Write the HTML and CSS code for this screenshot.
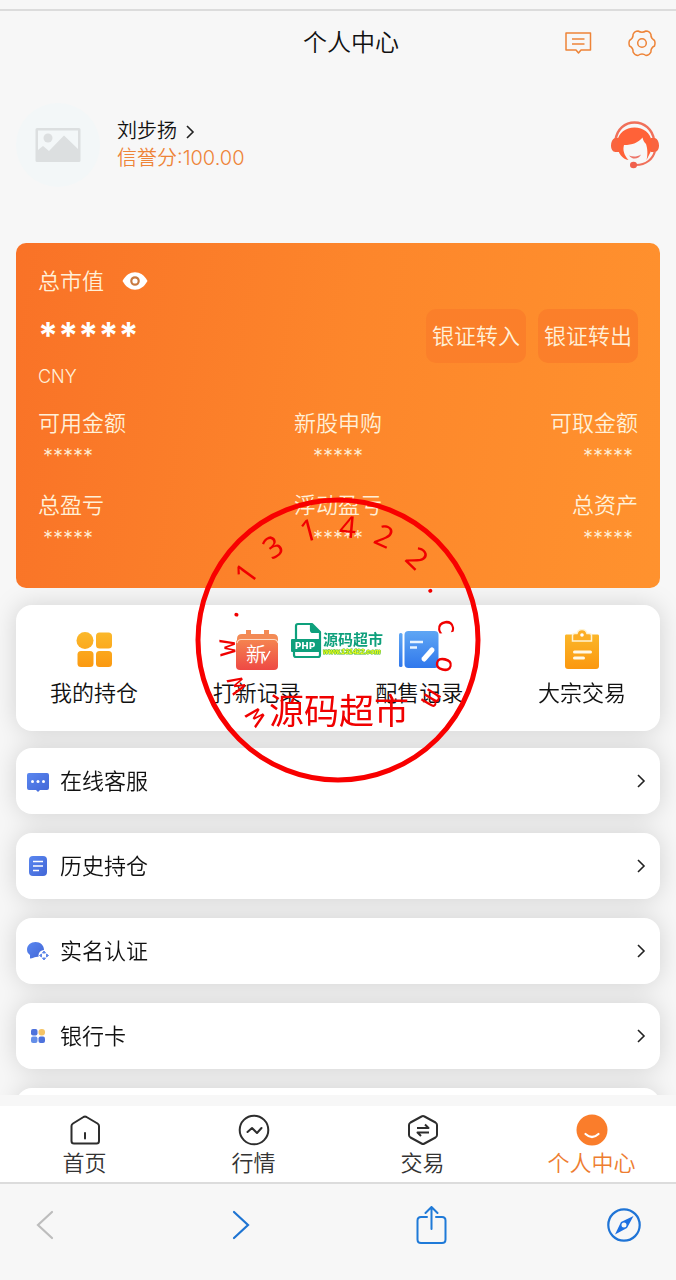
FILE: index.html
```html
<!DOCTYPE html>
<html lang="zh-CN">
<head>
    <meta charset="UTF-8">
    <meta name="viewport" content="width=device-width, initial-scale=1.0">
    <title>个人中心</title>
    <link rel="stylesheet" href="styles.css">
</head>
<body>
    <div class="app">
        <header class="top-bar">
            <h1 class="top-title">个人中心</h1>
            <div class="top-actions">
                <button class="icon-btn" type="button" aria-label="消息">
                    <svg width="28" height="28" viewBox="0 0 28 28" fill="none" stroke="#ee8438" stroke-width="1.500" stroke-linejoin="round">
                        <path d="M2 4h24.500v17H17l-2.500 3-2.500-3H2z"/>
                        <path d="M8 10h12.500M8 15h12.500"/>
                    </svg>
                </button>
                <button class="icon-btn" type="button" aria-label="设置">
                    <svg width="28" height="28" viewBox="0 0 28 28" fill="none" stroke="#ee8438" stroke-width="1.500" stroke-linejoin="round">
                        <path d="M10 2Q14 4.500 18 2Q21.500 2 23 5.500Q22.500 9 26.500 11.500Q27.500 14 26.500 17Q22.500 19 23 23Q21 26.500 18 26.500Q14 23.500 10 26.500Q7 26.500 5 23Q5.500 19 1.500 17Q.5 14 1.500 11.500Q5.500 9 5 5.500Q6.500 2 10 2Z"/>
                        <circle cx="14" cy="14" r="4.300"/>
                    </svg>
                </button>
            </div>
        </header>

        <main class="page">
            <!-- User -->
            <section class="profile">
                <div class="avatar">
                    <svg width="46" height="36" viewBox="0 0 46 36">
                        <path fill="#dcdfe0" fill-rule="evenodd" d="M2 1h42a1.500 1.500 0 0 1 1.500 1.500v31A1.500 1.500 0 0 1 44 35H2a1.500 1.500 0 0 1-1.500-1.500v-31A1.500 1.500 0 0 1 2 1zM3 3.500V23l5-4 6 5L29 8.500 43 22V3.500z"/>
                        <circle cx="13" cy="11" r="4.500" fill="#dcdfe0"/>
                    </svg>
                </div>
                <div class="user">
                    <a class="user-name" href="#">刘步扬
                        <svg width="10" height="14" viewBox="0 0 10 14" fill="none" stroke="#222" stroke-width="1.600"><path d="M2 1l6 6-6 6"/></svg>
                    </a>
                    <p class="user-credit">信誉分:100.00</p>
                </div>
                <button class="icon-btn" type="button" aria-label="客服">
                    <svg width="48" height="48" viewBox="0 0 48 48">
                        <path d="M4.500 19C6 8 14 1.500 23.500 1.500S41.500 8 43 19" fill="none" stroke="#f0705a" stroke-width="2.500"/>
                        <path d="M8 17v14H4.500C1.500 31 0 28 0 24.500S1.500 18 4 17zM40 17v14h3.500c3 0 4.500-3 4.500-6.500S46.500 18 44 17z" fill="#f9643f"/>
                        <path d="M6.500 20C7.500 12 14.500 6.500 23.500 6.500S39.500 12 40.500 20v9l-5 10c1.500-5 1-12-.5-16-2-2-3-4-3.500-6.500-4 5-10 7.500-18.500 7.500-1.500 5 0 10 4.500 15C11 38 7.500 32 6.500 27z" fill="#ff6238"/>
                        <path d="M18 34.500c4 1.500 8 1.500 12-1-2 5-9 5.500-12 1z" fill="#ec7468"/>
                        <path d="M44 30c-2 8-9 14-19 14" fill="none" stroke="#f0705a" stroke-width="2.200"/>
                        <ellipse cx="22.500" cy="44" rx="3.500" ry="3.200" fill="#f0604c"/>
                    </svg>
                </button>
            </section>

            <!-- Assets -->
            <section class="assets">
                <div class="assets-head">
                    <span>总市值</span>
                    <button class="icon-btn" type="button" aria-label="显示金额">
                        <svg width="26" height="20" viewBox="0 0 26 20">
                            <path d="M.5 10C4 4 8 1.300 13 1.300S22 4 25.500 10C22 16 18 18.700 13 18.700S4 16 .5 10z" fill="#fff"/>
                            <circle cx="13" cy="10" r="3.700" fill="none" stroke="#c87a40" stroke-width="2.200"/>
                        </svg>
                    </button>
                </div>
                <div class="balance">
                    <div>
                        <p class="balance-value">*****</p>
                        <p class="balance-currency">CNY</p>
                    </div>
                    <div class="transfer">
                        <button class="transfer-btn" type="button">银证转入</button>
                        <button class="transfer-btn" type="button">银证转出</button>
                    </div>
                </div>
                <dl class="stats">
                    <div class="stat"><dt>可用金额</dt><dd>*****</dd></div>
                    <div class="stat"><dt>新股申购</dt><dd>*****</dd></div>
                    <div class="stat"><dt>可取金额</dt><dd>*****</dd></div>
                    <div class="stat"><dt>总盈亏</dt><dd>*****</dd></div>
                    <div class="stat"><dt>浮动盈亏</dt><dd>*****</dd></div>
                    <div class="stat"><dt>总资产</dt><dd>*****</dd></div>
                </dl>
            </section>

            <div class="cards">
                <!-- Shortcuts -->
                <nav class="shortcuts">
                    <a class="shortcut" href="#">
                        <svg width="42" height="42" viewBox="0 0 42 42">
                            <defs><linearGradient id="amber" x1="0" y1="0" x2="0" y2="42" gradientUnits="userSpaceOnUse"><stop offset="0" stop-color="#fbbb2d"/><stop offset="1" stop-color="#fb960e"/></linearGradient></defs>
                            <g fill="url(#amber)">
                                <circle cx="12" cy="11.500" r="8.500"/>
                                <rect x="23" y="3.500" width="16" height="16" rx="3.500"/>
                                <rect x="4.500" y="22" width="16" height="16" rx="3.500"/>
                                <rect x="23" y="22" width="16" height="16" rx="3.500"/>
                            </g>
                        </svg>
                        <span>我的持仓</span>
                    </a>
                    <a class="shortcut" href="#">
                        <svg width="42" height="42" viewBox="0 0 42 42">
                            <defs><linearGradient id="red" x1="0" y1="0" x2="0" y2="1"><stop offset="0" stop-color="#f58550"/><stop offset="1" stop-color="#ee4944"/></linearGradient></defs>
                            <path d="M10 1h5v4h13V1h5v4h4q5 0 5 5v2H1v-2q0-5 5-5h4z" fill="#f38a55"/>
                            <rect x="0" y="10" width="42" height="31" rx="4" fill="url(#red)"/>
                            <path d="M1 14q1-3.500 4-3.500h33q3 0 4 3.500" fill="none" stroke="#fcd9c5" stroke-width="1.200"/>
                            <text class="ipo-text" x="20" y="33" text-anchor="middle">新</text>
                            <path d="M27 25l2 6 5-9" fill="none" stroke="#fff" stroke-width="1.500"/>
                        </svg>
                        <span>打新记录</span>
                    </a>
                    <a class="shortcut" href="#">
                        <svg width="42" height="42" viewBox="0 0 42 42">
                            <defs><linearGradient id="sky" x1="0" y1="0" x2="0" y2="1"><stop offset="0" stop-color="#5fa6f4"/><stop offset="1" stop-color="#3078ec"/></linearGradient></defs>
                            <rect x="1" y="4" width="3.500" height="34" rx="1.500" fill="url(#sky)"/>
                            <rect x="6.500" y="2" width="34" height="37" rx="4" fill="url(#sky)"/>
                            <path d="M12 13h13M12 18.500h7" stroke="#e8f4ff" stroke-width="2.500"/>
                            <path d="M26 30l8-9" stroke="#fff" stroke-width="5" stroke-linecap="round"/>
                        </svg>
                        <span>配售记录</span>
                    </a>
                    <a class="shortcut" href="#">
                        <svg width="42" height="42" viewBox="0 0 42 42">
                            <path d="M5 5.500h32q1 0 1 1.500v30q0 3-3 3H7q-3 0-3-3V7q0-1.500 1-1.500z" fill="url(#amber)"/>
                            <path d="M11.500 12V6.500q0-2 2.500-2h2Q17 .5 21 .5t5 4h2q2.500 0 2.500 2V12z" fill="#fcae24" stroke="#fff3d2" stroke-width="1.500"/>
                            <circle cx="21" cy="6" r="1.800" fill="#fff"/>
                            <path d="M13.500 23h16M13.500 29h9" stroke="#fff8e6" stroke-width="3" stroke-linecap="round"/>
                        </svg>
                        <span>大宗交易</span>
                    </a>
                </nav>

                <!-- Menu -->
                <div class="menu">
                    <a class="menu-item" href="#">
                        <svg width="24" height="24" viewBox="0 0 24 24">
                            <defs><linearGradient id="blue" x1="0" y1="0" x2="1" y2="1"><stop offset="0" stop-color="#5a87f0"/><stop offset="1" stop-color="#4266d6"/></linearGradient></defs>
                            <path d="M3 4h18q2 0 2 2v13q0 2-2 2h-7l-2 2-2-2H3q-2 0-2-2V6q0-2 2-2z" fill="url(#blue)"/>
                            <g fill="#fff"><circle cx="6.500" cy="12.500" r="1.500"/><circle cx="12" cy="12.500" r="1.500"/><circle cx="17.500" cy="12.500" r="1.500"/></g>
                        </svg>
                        <span class="menu-label">在线客服</span>
                        <svg width="10" height="14" viewBox="0 0 10 14" fill="none" stroke="#222" stroke-width="1.600"><path d="M2 1l6 6-6 6"/></svg>
                    </a>
                    <a class="menu-item" href="#">
                        <svg width="24" height="24" viewBox="0 0 24 24">
                            <rect x="3" y="2" width="18" height="20" rx="4" fill="url(#blue)"/>
                            <path d="M7 7.500h10M7 12h10M7 16.500h6" stroke="#fff" stroke-width="1.500"/>
                        </svg>
                        <span class="menu-label">历史持仓</span>
                        <svg width="10" height="14" viewBox="0 0 10 14" fill="none" stroke="#222" stroke-width="1.600"><path d="M2 1l6 6-6 6"/></svg>
                    </a>
                    <a class="menu-item" href="#">
                        <svg width="24" height="24" viewBox="0 0 24 24">
                            <path d="M9.500 3c5 0 8.500 3.500 8.500 8 0 4-3.500 7-8 7-2 0-3 1.500-6 1.500V16C2 14.500 1 13 1 10.500 1 6 5 3 9.500 3z" fill="url(#blue)"/>
                            <circle cx="18" cy="16.500" r="5.500" fill="#fff"/>
                            <path d="M18 12l1.500 2h-3zM18 21l1.500-2h-3zM13.500 16.500l2-1.500v3zM22.500 16.500l-2-1.500v3z" fill="#5d86e8" stroke="#5d86e8"/>
                        </svg>
                        <span class="menu-label">实名认证</span>
                        <svg width="10" height="14" viewBox="0 0 10 14" fill="none" stroke="#222" stroke-width="1.600"><path d="M2 1l6 6-6 6"/></svg>
                    </a>
                    <a class="menu-item" href="#">
                        <svg width="24" height="24" viewBox="0 0 24 24">
                            <rect x="5" y="5" width="6.500" height="6.500" rx="2" fill="#4d72dc"/>
                            <rect x="12.500" y="5" width="6.500" height="6.500" rx="3" fill="#f5c466"/>
                            <rect x="5" y="12.500" width="6.500" height="6.500" rx="2" fill="#648ee8"/>
                            <rect x="12.500" y="12.500" width="6.500" height="6.500" rx="2" fill="#4d72dc"/>
                        </svg>
                        <span class="menu-label">银行卡</span>
                        <svg width="10" height="14" viewBox="0 0 10 14" fill="none" stroke="#222" stroke-width="1.600"><path d="M2 1l6 6-6 6"/></svg>
                    </a>
                    <div class="menu-item"></div>
                </div>
            </div>
        </main>

        <nav class="tab-bar">
            <a class="tab" href="#">
                <svg width="32" height="32" viewBox="0 0 32 32" fill="none" stroke="#2d2d2d" stroke-width="2" stroke-linejoin="round" stroke-linecap="round">
                    <path d="M4 9.500q-1.500 1-1.500 2.500v15q0 2.500 2.500 2.500h22.500q2.500 0 2.500-2.500V12q0-1.500-1.500-2.500L17.500 3q-1.500-.8-3 0z"/><path d="M16 19v5.500"/>
                </svg>
                <span>首页</span>
            </a>
            <a class="tab" href="#">
                <svg width="32" height="32" viewBox="0 0 32 32" fill="none" stroke="#2d2d2d" stroke-width="2" stroke-linejoin="round" stroke-linecap="round">
                    <circle cx="16" cy="16" r="14.300"/><path d="M9.500 18l4.500-4 5 5 4.500-5"/>
                </svg>
                <span>行情</span>
            </a>
            <a class="tab" href="#">
                <svg width="32" height="32" viewBox="0 0 32 32" fill="none" stroke="#2d2d2d" stroke-width="2" stroke-linejoin="round">
                    <path d="M14.500 2.500q1.500-.8 3 0l11 6q1.500 1 1.500 2.500v10q0 1.500-1.500 2.500l-11 6q-1.500.8-3 0l-11-6Q2 22.500 2 21V11q0-1.500 1.500-2.500z"/>
                    <path d="M10 14h11.500l-3.500-3.500M22 18.500H10.500L14 22"/>
                </svg>
                <span>交易</span>
            </a>
            <a class="tab tab-active" href="#" aria-current="page">
                <svg width="32" height="32" viewBox="0 0 32 32">
                    <circle cx="16" cy="16" r="15.500" fill="#fa7d2b"/>
                    <path d="M9.500 20q6.500 6 13 0" fill="none" stroke="#fff" stroke-width="2.200" stroke-linecap="round"/>
                </svg>
                <span>个人中心</span>
            </a>
        </nav>

        <footer class="browser-bar">
            <button class="icon-btn" type="button" aria-label="后退">
                <svg width="34" height="38" viewBox="0 0 34 38" fill="none" stroke="#bdbdbd" stroke-width="2.200" stroke-linecap="round"><path d="M24 6L10 19l14 13"/></svg>
            </button>
            <button class="icon-btn" type="button" aria-label="前进">
                <svg width="34" height="38" viewBox="0 0 34 38" fill="none" stroke="#1e74d2" stroke-width="2.200" stroke-linecap="round"><path d="M13 6l14 13-14 13"/></svg>
            </button>
            <button class="icon-btn" type="button" aria-label="分享">
                <svg width="34" height="38" viewBox="0 0 34 38" fill="none" stroke="#1f7ad8" stroke-width="2" stroke-linecap="round" stroke-linejoin="round">
                    <path d="M13 11H7q-3.500 0-3.500 3.500v19Q3.500 37 7 37h21q3.500 0 3.500-3.500v-19Q31.500 11 28 11h-6"/><path d="M17.500 23V1M11.500 7l6-6 6 6"/>
                </svg>
            </button>
            <button class="icon-btn" type="button" aria-label="浏览器">
                <svg width="34" height="38" viewBox="0 0 34 38">
                    <circle cx="17" cy="19" r="15.700" fill="none" stroke="#1f74d6" stroke-width="2.200"/>
                    <path fill="#1d70e2" fill-rule="evenodd" d="M26.500 10L20 22 8 28.500 14 16zM17 16.500a2.500 2.500 0 1 0 0 5 2.500 2.500 0 0 0 0-5z"/>
                </svg>
            </button>
        </footer>

        <!-- Site stamp, floats above the page -->
        <svg class="stamp" width="286" height="286" viewBox="-143 -143 286 286">
            <circle r="140" fill="none" stroke="#f80000" stroke-width="5"/>
            <g class="stamp-ring" text-anchor="middle">
                <text class="stamp-letter" transform="rotate(-133) translate(0 -105)">w</text>
                <text class="stamp-letter" transform="rotate(-114) translate(0 -103)">w</text>
                <text class="stamp-letter" transform="rotate(-94) translate(0 -103)">w</text>
                <text transform="rotate(-76) translate(0 -103)">.</text>
                <text transform="rotate(-54) translate(0 -103)">1</text>
                <text transform="rotate(-35) translate(0 -103)">3</text>
                <text transform="rotate(-15) translate(0 -103)">1</text>
                <text transform="rotate(5) translate(0 -103)">4</text>
                <text transform="rotate(24) translate(0 -103)">2</text>
                <text transform="rotate(44) translate(0 -103)">2</text>
                <text transform="rotate(62) translate(0 -103)">.</text>
                <text class="stamp-letter" transform="rotate(83) translate(0 -101)">c</text>
                <text class="stamp-letter" transform="rotate(103) translate(0 -101)">o</text>
                <text class="stamp-letter" transform="rotate(122) translate(0 -102)">m</text>
            </g>
            <text class="stamp-name" x="1" y="84" text-anchor="middle">源码超市</text>
            <g fill="none" stroke="#0ea07c" stroke-width="2.200" stroke-linejoin="round">
                <path d="M-42 0v-14q0-2 2-2h14l8 8v23q0 2-2 2h-22q-2 0-2-2v-6"/>
                <path d="M-27-16v6q0 2 2 2h7" fill="#0ea07c"/>
            </g>
            <rect x="-47" y="-1" width="30" height="13" rx="1" fill="#0ea07c"/>
            <text class="stamp-php" x="-33" y="9" text-anchor="middle">PHP</text>
            <text class="stamp-logo" x="-15" y="5">源码超市</text>
            <text class="stamp-url" x="-15" y="14">www.131422.com</text>
        </svg>
    </div>
</body>
</html>
```
FILE: styles.css
```css
/* --- General Styles --- */
* {
    margin: 0;
    padding: 0;
    box-sizing: border-box;
}

body {
    background: #f7f7f7;
    color: #111;
    font-family: Inter, "Noto Sans CJK SC", sans-serif;
    font-size: 22px;
    font-weight: 350;
    line-height: 32px;
}

a {
    color: inherit;
    text-decoration: none;
}

svg {
    display: block;
    flex-shrink: 0;
}

.icon-btn {
    background: none;
    border: none;
    cursor: pointer;
}

.app {
    position: relative;
    display: flex;
    flex-direction: column;
    height: 100vh;
    overflow: hidden;
    padding-top: 9px;
}

/* --- Top Bar --- */
.top-bar {
    display: grid;
    grid-template-columns: 1fr auto 1fr;
    align-items: center;
    flex-shrink: 0;
    height: 66px;
    padding: 0 20px 0 46px;
    border-top: 2px solid #dcdcdc;
}

.top-title {
    grid-column: 2;
    font-size: 24px;
    font-weight: inherit;
}

.top-actions {
    display: flex;
    justify-content: flex-end;
    gap: 36px;
}

/* --- Page --- */
.page {
    flex: 1;
    min-height: 0;
    margin-bottom: 11px;
    overflow-y: auto;
    scrollbar-width: none;
}

.profile {
    display: flex;
    align-items: center;
    gap: 17px;
    padding: 28px 17px 56px 16px;
}

.avatar {
    display: flex;
    justify-content: center;
    align-items: center;
    width: 84px;
    height: 84px;
    border-radius: 50%;
    background: #f3f7f8;
}

.user {
    flex: 1;
    font-size: 20px;
    line-height: 27px;
}

.user-name {
    display: flex;
    align-items: center;
    gap: 8px;
}

.user-credit {
    color: #ee8438;
}

/* --- Assets --- */
.assets {
    margin: 0 16px;
    position: relative;
    z-index: 1;
    padding: 22px 22px 39px;
    border-radius: 10px;
    background: linear-gradient(100deg, #f97227, #fd862b 50%, #ff922e);
    color: #fff0d8;
}

.assets-head {
    display: flex;
    align-items: center;
    gap: 18px;
}

.balance {
    display: flex;
    justify-content: space-between;
    align-items: flex-start;
    margin: 12px 0 15px;
}

.balance-value {
    height: 53px;
    color: #fff;
    font-size: 36px;
    font-weight: 700;
    line-height: 53px;
}

.balance-currency {
    font-size: 18px;
    line-height: 30px;
}

.transfer {
    display: flex;
    gap: 12px;
}

.transfer-btn {
    width: 100px;
    height: 54px;
    border: none;
    border-radius: 10px;
    background: #fb7f2a;
    color: inherit;
    font: inherit;
    cursor: pointer;
}

.stats {
    display: grid;
    grid-template-columns: repeat(3, 1fr);
    row-gap: 22px;
    text-align: center;
}

.stat:nth-child(3n+1) {
    text-align: left;
}

.stat:nth-child(3n) {
    text-align: right;
}

.stat dd {
    height: 28px;
    padding: 0 5px;
    font-size: 20px;
    line-height: 34px;
}

/* --- Cards --- */
.cards {
    display: flex;
    flex-direction: column;
    gap: 17px;
    padding: 17px 16px;
    filter: drop-shadow(0 0 12px rgba(0, 0, 0, 0.15));
}

.shortcuts {
    display: flex;
    justify-content: space-between;
    padding: 24px 34px 22px;
    border-radius: 16px;
    background: #fff;
}

.shortcut {
    display: flex;
    flex-direction: column;
    align-items: center;
    gap: 6px;
}

.ipo-text {
    fill: #fff;
    font-size: 20px;
}

.menu {
    display: flex;
    flex-direction: column;
    gap: 19px;
}

.menu-item {
    display: flex;
    align-items: center;
    gap: 10px;
    min-height: 66px;
    padding: 0 14px 0 10px;
    border-radius: 16px;
    background: #fff;
}

.menu-label {
    flex: 1;
}

/* --- Tab Bar --- */
.tab-bar {
    display: grid;
    grid-template-columns: repeat(4, 1fr);
    flex-shrink: 0;
    padding: 8px 0 3px;
    border-bottom: 2px solid #dcdcdc;
    background: #fff;
    color: #333;
}

.tab {
    display: flex;
    flex-direction: column;
    align-items: center;
    gap: 1px;
}

.tab-active {
    color: #ee7d30;
}

/* --- Browser Bar --- */
.browser-bar {
    display: flex;
    justify-content: space-between;
    flex-shrink: 0;
    height: 96px;
    padding: 22px 35px 36px 28px;
}

/* --- Stamp --- */
.stamp {
    position: absolute;
    z-index: 2;
    top: 50%;
    left: 50%;
    transform: translate(-50%, -50%);
    pointer-events: none;
}

.stamp-ring {
    fill: #f00000;
    font-family: "Noto Sans", sans-serif;
    font-size: 30px;
    font-weight: 400;
}

.stamp-letter {
    font-family: "DejaVu Sans Mono", monospace;
    font-size: 28px;
}

.stamp-name {
    fill: #f00000;
    font-size: 35px;
    font-weight: 400;
}

.stamp-php {
    fill: #fff;
    font-family: "DejaVu Sans", sans-serif;
    font-size: 9px;
    font-weight: 700;
}

.stamp-logo {
    fill: #0ea07c;
    font-size: 15px;
    font-weight: 700;
}

.stamp-url {
    fill: #f2ff20;
    stroke: #4fb82a;
    stroke-width: 1px;
    paint-order: stroke;
    font-family: "Liberation Sans", sans-serif;
    font-size: 7px;
    font-style: italic;
    font-weight: 700;
}
```
